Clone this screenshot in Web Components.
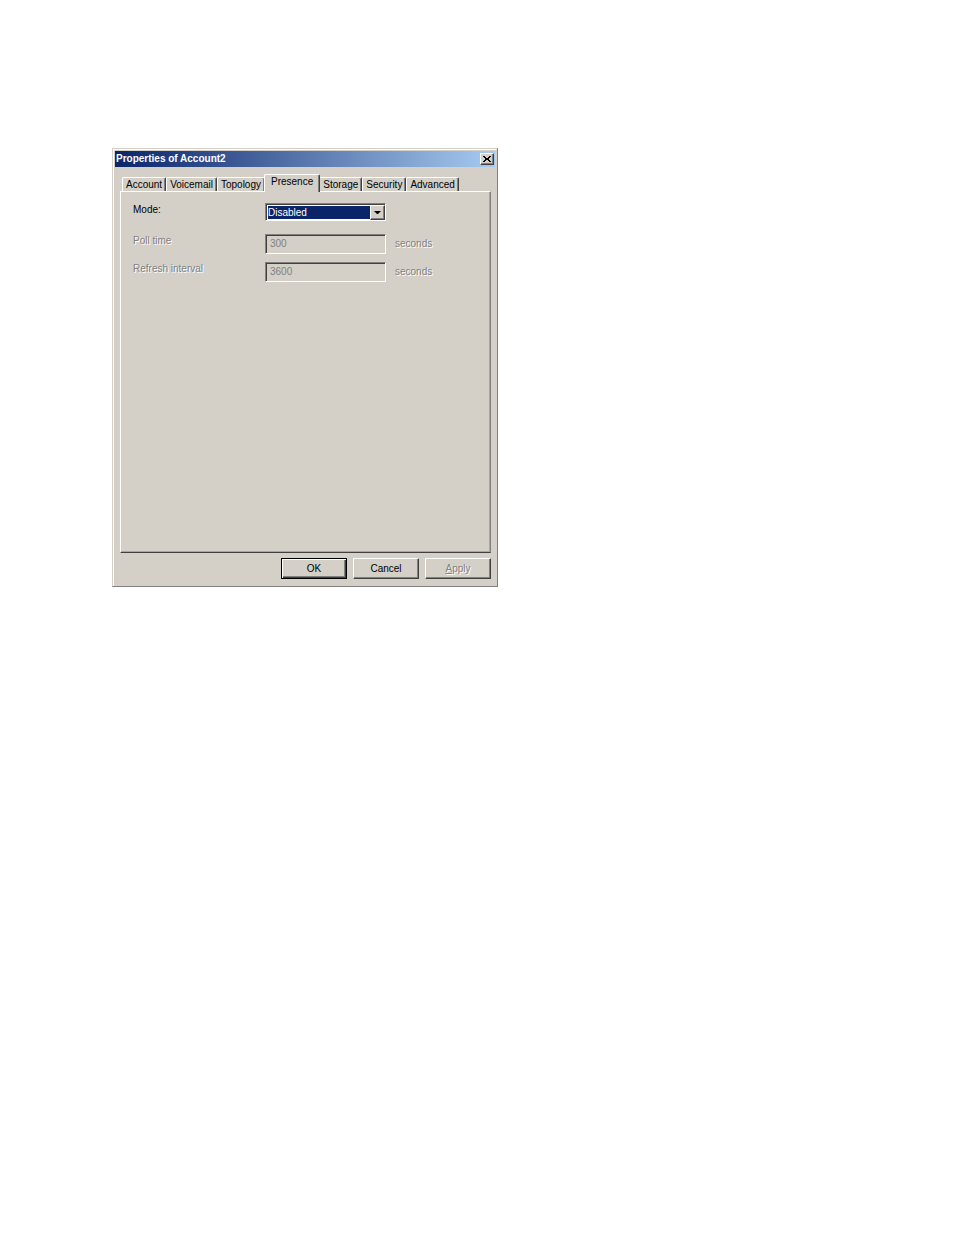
<!DOCTYPE html>
<html lang="en">
<head>
<meta charset="utf-8">
<title>Properties of Account2</title>
<style>
  body {
    margin: 0;
    padding: 148px 112px;
    background: white;
    color: black;
    font: 10px/12px "Liberation Sans", Arial, sans-serif;
    --face: #d4d0c8;
    --light: #ffffff;
    --shadow: #808080;
    --dark: #404040;
    --navy: #0a246a;
  }
  me-dialog {
    max-width: 386px;
  }
</style>
</head>
<body>
  <me-dialog>
    <span slot="title">Properties of Account2</span>
    <me-tabs>
      <me-tab>Account</me-tab>
      <me-tab>Voicemail</me-tab>
      <me-tab>Topology</me-tab>
      <me-tab selected>Presence</me-tab>
      <me-tab>Storage</me-tab>
      <me-tab>Security</me-tab>
      <me-tab>Advanced</me-tab>
    </me-tabs>
    <me-panel>
      <me-choice label="Mode:" value="Disabled"></me-choice>
      <me-field label="Poll time" value="300" unit="seconds"></me-field>
      <me-field label="Refresh interval" value="3600" unit="seconds"></me-field>
    </me-panel>
    <me-button slot="actions" default>OK</me-button>
    <me-button slot="actions">Cancel</me-button>
    <me-button slot="actions" disabled><u>A</u>pply</me-button>
  </me-dialog>

<script>
class MeDialog extends HTMLElement {
  constructor() {
    super();
    this._root = this.attachShadow({mode: 'open'});
  }
  connectedCallback() {
    this._root.innerHTML = `
      <style>
        :host {
          display: block;
          box-sizing: border-box;
          background: var(--face);
          border: 1px solid var(--face);
          border-right-color: var(--shadow);
          border-bottom-color: var(--shadow);
        }
        .frame {
          border: 1px solid var(--light);
          border-right-color: var(--face);
          border-bottom-color: var(--face);
          padding: 1px;
        }
        .title-bar {
          display: flex;
          align-items: center;
          justify-content: space-between;
          height: 16px;
          padding: 0 1px;
          background: linear-gradient(to right, #0a246a, #a6caf0);
          color: white;
          font-weight: bold;
        }
        .close {
          display: flex;
          align-items: center;
          justify-content: center;
          width: 14px;
          height: 12px;
          padding: 0;
          background: var(--face);
          border: 1px solid var(--light);
          border-right-color: var(--dark);
          border-bottom-color: var(--dark);
          box-shadow: inset -1px -1px var(--shadow);
        }
        .content {
          padding: 7px 4px 5px 5px;
        }
        .actions {
          display: flex;
          justify-content: flex-end;
          gap: 6px;
          padding-top: 5px;
        }
      </style>
      <div class="frame">
        <div class="title-bar">
          <slot name="title"></slot>
          <button class="close" type="button" aria-label="Close">
            <svg width="8" height="6" viewBox="0 0 8 6" shape-rendering="crispEdges">
              <path d="M0 0h2v1h-2zM6 0h2v1h-2zM1 1h2v1h-2zM5 1h2v1h-2zM2 2h4v2h-4zM1 4h2v1h-2zM5 4h2v1h-2zM0 5h2v1h-2zM6 5h2v1h-2z"/>
            </svg>
          </button>
        </div>
        <div class="content">
          <slot></slot>
          <div class="actions"><slot name="actions"></slot></div>
        </div>
      </div>
    `;
  }
}

class MeTabs extends HTMLElement {
  constructor() {
    super();
    this._root = this.attachShadow({mode: 'open'});
  }
  connectedCallback() {
    this.setAttribute('role', 'tablist');
    this._root.innerHTML = `
      <style>
        :host {
          display: flex;
          align-items: flex-end;
          padding-left: 2px;
        }
      </style>
      <slot></slot>
    `;
  }
}

class MeTab extends HTMLElement {
  constructor() {
    super();
    this._root = this.attachShadow({mode: 'open'});
  }
  connectedCallback() {
    this._root.innerHTML = `
      <style>
        :host {
          display: block;
        }
        button {
          display: block;
          height: 14px;
          padding: 0 3px;
          background: var(--face);
          color: inherit;
          font: inherit;
          border: 1px solid var(--light);
          border-right-color: var(--dark);
          border-bottom: 0;
          border-radius: 2px 2px 0 0;
          box-shadow: inset -1px 0 var(--shadow);
        }
        /* the open tab is taller, and covers its neighbours and the panel's top edge */
        :host([selected]) button {
          position: relative;
          z-index: 1;
          height: 18px;
          margin: 0 -1px -1px;
          padding: 0 6px 3px;
        }
      </style>
      <button type="button" role="tab" aria-selected="${this.hasAttribute('selected')}"><slot></slot></button>
    `;
  }
}

class MePanel extends HTMLElement {
  constructor() {
    super();
    this._root = this.attachShadow({mode: 'open'});
  }
  connectedCallback() {
    this._root.innerHTML = `
      <style>
        :host {
          display: flex;
          flex-direction: column;
          gap: 8px;
          box-sizing: border-box;
          min-height: 362px;
          padding: 11px 12px;
          border: 1px solid var(--light);
          border-right-color: var(--shadow);
          border-bottom-color: var(--dark);
          box-shadow: inset -1px -1px #a9a6a0;
        }
      </style>
      <slot></slot>
    `;
  }
}

const rowStyle = `
  :host {
    display: grid;
    grid-template-columns: 132px 121px 1fr;
  }
  label {
    padding-top: 1px;
  }
  .sunken {
    box-sizing: border-box;
    border: 1px solid var(--shadow);
    border-right-color: var(--light);
    border-bottom-color: var(--light);
    box-shadow: inset 1px 1px var(--dark);
  }
`;

class MeChoice extends HTMLElement {
  constructor() {
    super();
    this._root = this.attachShadow({mode: 'open'});
  }
  connectedCallback() {
    this._root.innerHTML = `
      <style>
        ${rowStyle}
        :host {
          padding-bottom: 5px;
        }
        .box {
          display: grid;
          grid-template-columns: 1fr 15px;
          height: 18px;
          padding: 1px 0 0 1px;
          background: white;
        }
        select {
          grid-area: 1 / 1 / 2 / 3;
          appearance: none;
          width: 100%;
          height: 15px;
          padding: 0 16px 0 0;
          border: 1px solid white;
          border-radius: 0;
          background: var(--navy);
          color: white;
          font: inherit;
          outline: none;
        }
        .arrow {
          grid-area: 1 / 2;
          display: flex;
          align-items: center;
          justify-content: center;
          box-sizing: border-box;
          height: 15px;
          z-index: 1;
          pointer-events: none;
          background: var(--face);
          border: 1px solid var(--light);
          border-right-color: var(--dark);
          border-bottom-color: var(--dark);
          box-shadow: inset -1px -1px var(--shadow);
        }
      </style>
      <label for="choice">${this.getAttribute('label')}</label>
      <div class="box sunken">
        <select id="choice"><option>${this.getAttribute('value')}</option></select>
        <span class="arrow">
          <svg width="7" height="4" viewBox="0 0 7 4"><path d="M0 0h7L4 3H3z"/></svg>
        </span>
      </div>
    `;
  }
}

class MeField extends HTMLElement {
  constructor() {
    super();
    this._root = this.attachShadow({mode: 'open'});
  }
  connectedCallback() {
    this._root.innerHTML = `
      <style>
        ${rowStyle}
        :host {
          color: var(--shadow);
        }
        label, .unit {
          text-shadow: 1px 1px var(--light);
        }
        input {
          width: 100%;
          height: 20px;
          padding: 0 4px 2px;
          background: var(--face);
          color: inherit;
          font: inherit;
        }
        .unit {
          padding: 4px 9px 0;
        }
      </style>
      <label for="field">${this.getAttribute('label')}</label>
      <input id="field" class="sunken" type="text" value="${this.getAttribute('value')}" disabled>
      <span class="unit">${this.getAttribute('unit')}</span>
    `;
  }
}

class MeButton extends HTMLElement {
  constructor() {
    super();
    this._root = this.attachShadow({mode: 'open'});
  }
  connectedCallback() {
    const disabled = this.hasAttribute('disabled') ? 'disabled' : '';
    this._root.innerHTML = `
      <style>
        :host {
          display: block;
        }
        button {
          display: block;
          width: 66px;
          height: 21px;
          padding: 0;
          background: var(--face);
          color: black;
          font: inherit;
          border: 1px solid var(--light);
          border-right-color: var(--dark);
          border-bottom-color: var(--dark);
          box-shadow: inset -1px -1px var(--shadow);
        }
        :host([default]) button {
          border-color: black;
          box-shadow: inset 1px 1px var(--light), inset -1px -1px var(--dark), inset -2px -2px var(--shadow);
        }
        button:disabled {
          color: var(--shadow);
          text-shadow: 1px 1px var(--light);
        }
      </style>
      <button type="button" ${disabled}><slot></slot></button>
    `;
  }
}

window.customElements.define('me-dialog', MeDialog);
window.customElements.define('me-tabs', MeTabs);
window.customElements.define('me-tab', MeTab);
window.customElements.define('me-panel', MePanel);
window.customElements.define('me-choice', MeChoice);
window.customElements.define('me-field', MeField);
window.customElements.define('me-button', MeButton);
</script>
</body>
</html>
